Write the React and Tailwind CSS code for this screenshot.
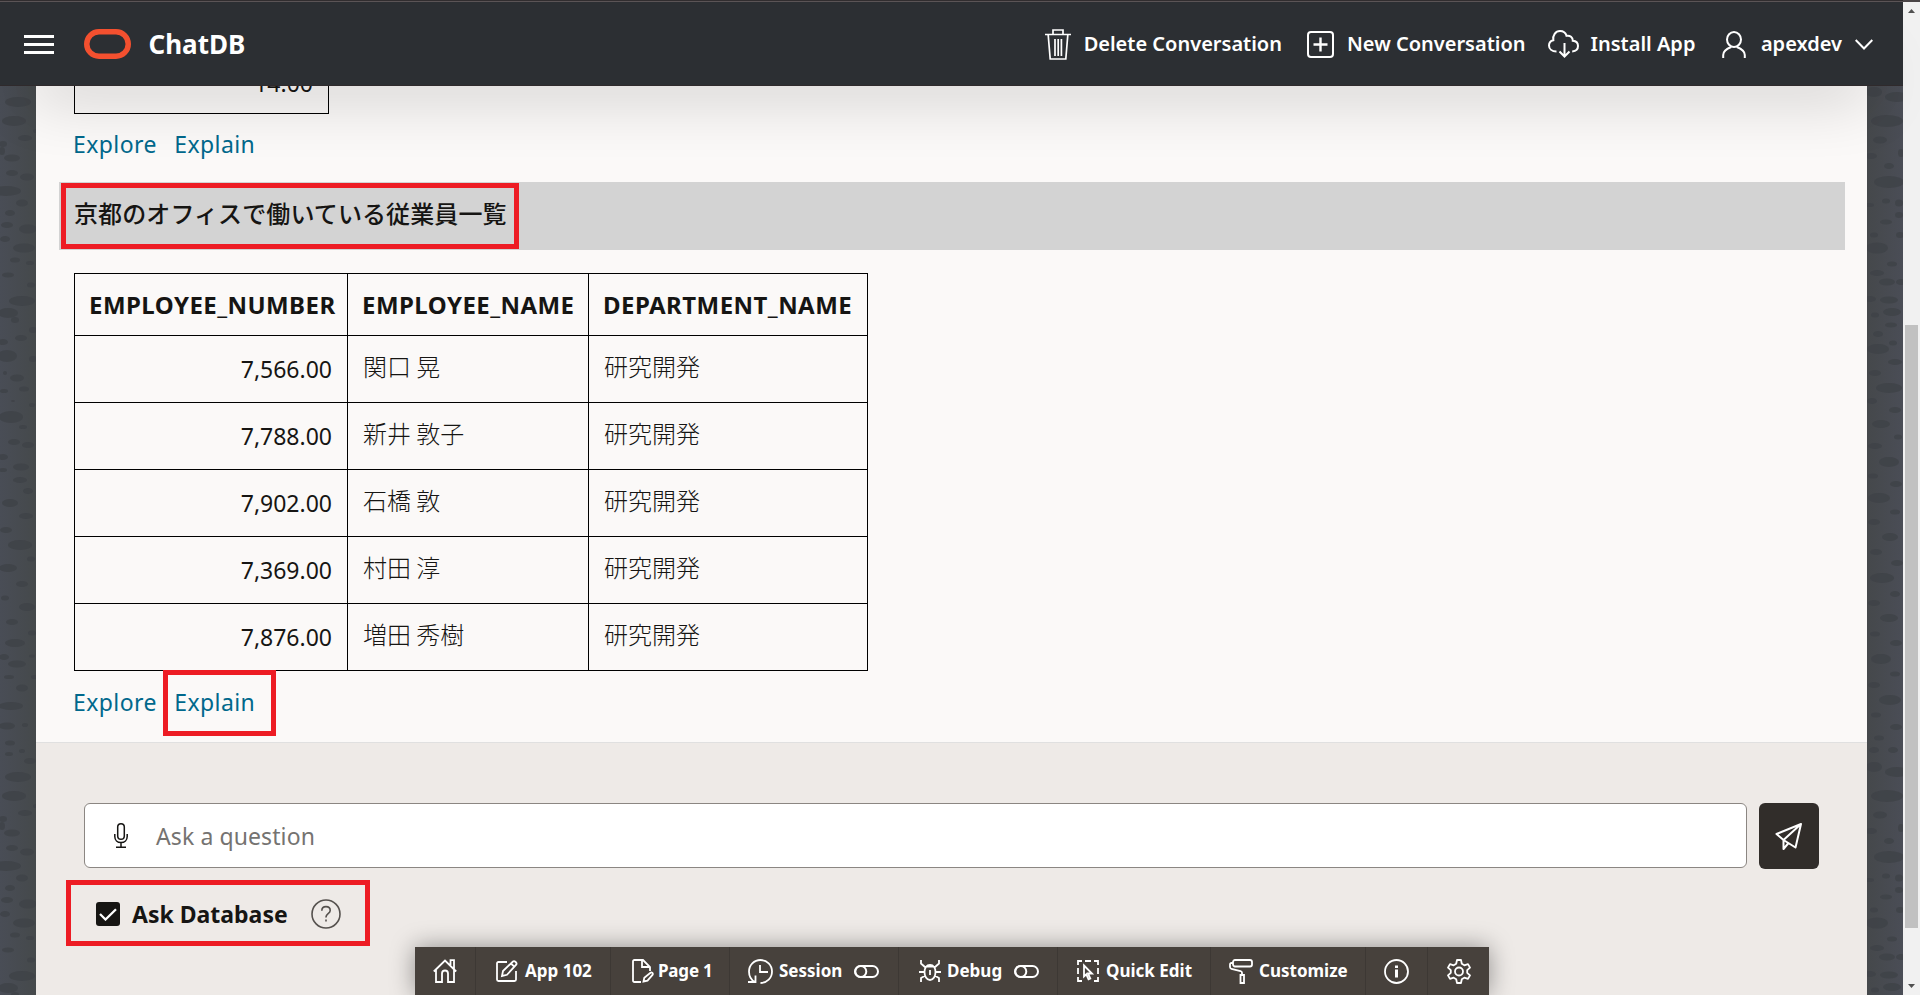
import React from "react";

const employees = [
  { number: "7,566.00", name: "関口 晃", department: "研究開発" },
  { number: "7,788.00", name: "新井 敦子", department: "研究開発" },
  { number: "7,902.00", name: "石橋 敦", department: "研究開発" },
  { number: "7,369.00", name: "村田 淳", department: "研究開発" },
  { number: "7,876.00", name: "増田 秀樹", department: "研究開発" },
];

// [cx, cy, rx, ry], the texture repeats every 675px
const TILE = 675;
const leftSpots = [
  [18, 102, 13, 5], [14, 121, 12, 5], [25, 138, 7, 3], [3, 144, 4, 3], [2, 151, 3, 4], [12, 158, 8, 3.5],
  [36, 131, 3, 2], [12, 173, 6, 3], [27, 177, 7, 3.5], [6, 191, 15, 5], [22, 203, 6, 3.5], [10, 213, 5, 3],
  [28, 229, 9, 4.5], [7, 225, 6, 3], [5, 239, 5, 3], [24, 248, 11, 4.5], [15, 260, 5, 2.5], [30, 263, 4, 2],
  [8, 275, 6, 2.5], [31, 285, 4, 2.5], [22, 301, 13, 5], [8, 313, 10, 5], [15, 320, 4, 3], [33, 330, 4, 3],
  [21, 338, 6, 3], [3, 342, 5, 3], [7, 356, 10, 6], [33, 359, 4, 3], [5, 373, 2, 2], [17, 378, 7, 3.5],
  [4, 391, 4, 2], [24, 389, 5, 2.5], [32, 405, 3, 2], [13, 401, 2, 1], [11, 417, 12, 6], [23, 427, 4, 2],
  [14, 442, 6, 3], [28, 445, 6, 3], [3, 457, 5, 3], [21, 467, 8, 3.5], [3, 470, 4, 2], [20, 480, 7, 3],
  [28, 491, 5, 3], [10, 503, 8, 4], [26, 516, 7, 3], [6, 530, 6, 3], [20, 545, 12, 5], [31, 559, 4, 2.5],
  [8, 568, 9, 4], [22, 584, 6, 3], [5, 598, 4, 2.5], [27, 607, 8, 4], [12, 622, 6, 3], [32, 633, 4, 2.5],
  [15, 643, 10, 4], [4, 657, 5, 3], [17, 664, 9, 3.5], [32, 656, 3, 1.5], [9, 677, 5, 2], [34, 677, 3, 2],
  [22, 688, 6, 3.5], [11, 706, 12, 4], [7, 726, 8, 3.5], [25, 725, 3, 2], [10, 743, 5, 2.5], [22, 751, 3, 2],
  [9, 754, 4, 2], [30, 761, 6, 3],
];
const rightSpots = [
  [7, 92, 8, 5], [30, 97, 12, 5], [20, 121, 16, 6], [13, 140, 7, 3.5], [34, 153, 3, 4], [4, 156, 6, 3],
  [22, 166, 5, 3], [22, 182, 15, 6], [19, 201, 4, 2.5], [2, 205, 5, 2], [32, 203, 4, 3.5], [32, 215, 4, 3],
  [19, 222, 6, 2.5], [7, 235, 4, 2.5], [33, 235, 4, 3], [10, 248, 11, 5.5], [25, 264, 5, 2.5], [10, 273, 7, 3],
  [20, 282, 8, 3.5], [34, 282, 5, 3], [22, 300, 9, 3.5], [3, 299, 6, 3], [25, 312, 9, 4], [8, 315, 4, 2.5],
  [24, 325, 6, 2.5], [11, 334, 5, 3], [26, 343, 4, 2.5], [11, 349, 11, 5], [28, 362, 7, 3], [8, 373, 6, 3],
  [22, 388, 13, 5], [5, 401, 5, 3], [28, 410, 6, 3], [14, 424, 9, 4], [31, 437, 4, 2.5], [8, 446, 7, 3],
  [22, 462, 10, 5], [6, 476, 5, 2.5], [29, 484, 6, 3], [12, 498, 11, 5], [28, 512, 5, 2.5], [7, 522, 6, 3],
  [23, 537, 8, 4], [9, 552, 6, 3], [30, 563, 6, 3], [15, 578, 12, 5], [28, 594, 5, 3], [7, 603, 6, 3],
  [22, 618, 9, 4], [8, 634, 5, 2.5], [29, 643, 6, 3], [14, 659, 10, 5], [28, 674, 5, 2.5], [7, 685, 6, 3],
  [23, 700, 11, 5], [9, 715, 5, 2.5], [29, 727, 6, 3], [12, 738, 5, 2.5], [7, 750, 5, 3], [26, 750, 5, 3],
];

function Texture({ spots, side }) {
  return (
    <div
      className={
        side === "left"
          ? "w-9 shrink-0 bg-linear-to-r from-[#494d56] to-[#45494b]"
          : "w-9 shrink-0 bg-linear-to-r from-[#45484b] to-[#4a4d56]"
      }
    >
      <svg width="36" height="909" viewBox="0 86 36 909" fill="#3f4247">
        {[0, TILE].map((dy) =>
          spots.map(([cx, cy, rx, ry], i) => (
            <ellipse key={`${dy}-${i}`} cx={cx} cy={cy + dy} rx={rx} ry={ry} opacity="0.8" />
          ))
        )}
      </svg>
    </div>
  );
}

function Svg({ w, h, sw = 2, className = "", children }) {
  return (
    <svg
      width={w}
      height={h}
      viewBox={`0 0 ${w} ${h}`}
      fill="none"
      stroke="currentColor"
      strokeWidth={sw}
      className={`shrink-0 ${className}`}
    >
      {children}
    </svg>
  );
}

function Header() {
  return (
    <header className="relative z-10 flex h-[86px] shrink-0 flex-col border-b border-[#2f2a2c] bg-[#2c2f33] text-white shadow-[0_36px_64px_-32px_rgba(0,0,0,0.33)]">
      <div className="h-px bg-[#312d2f]" />
      <div className="h-px bg-[#5b5456]" />
      <div className="flex flex-1 items-center pt-px pl-6">
        <div className="flex w-[30px] flex-col gap-[5px]">
          <div className="h-[3px] bg-white" />
          <div className="h-[3px] bg-white" />
          <div className="h-[3px] bg-white" />
        </div>
        <Svg w={47} h={30} sw={5.5} className="ml-[29.5px] text-[#f4502f]">
          <rect x="2.75" y="2.75" width="41.5" height="24.5" rx="12.25" />
        </Svg>
        <span className="ml-[18px] text-[26px] leading-8 font-bold">ChatDB</span>
        <div className="ml-auto flex items-center pr-[30px] text-[20px] leading-7 font-semibold">
          <Svg w={26} h={31}>
            <path d="M0 5.5h26M8 5V1h10v4M3.2 6l2 24h15.6l2-24M10 10v17M13.2 10v17M16.4 10v17" strokeWidth="1.7" />
          </Svg>
          <span className="ml-[13px]">Delete Conversation</span>
          <Svg w={27} h={27} className="ml-[25px]">
            <rect x="1" y="1" width="25" height="25" rx="3" />
            <path d="M13.5 6.5v14M6.5 13.5h14" strokeWidth="2.4" />
          </Svg>
          <span className="ml-[13px]">New Conversation</span>
          <Svg w={31} h={28} className="ml-[22.5px]">
            <path d="M8.5 21.5C4 21.5 1 19 1 15.5c0-2.600 1.800-4.700 4.300-5.300C4.500 5.500 7.500 1 12 1c3.300 0 5.700 2 6.500 4.800 3.500-.8 6.500 1.700 6.300 5 3 .3 5.200 2.400 5.200 5.200 0 3-2.300 5.200-5.800 5.400M16.500 13v13.500M11.500 21.500l5 5 5-5" />
          </Svg>
          <span className="ml-[11.5px]">Install App</span>
          <Svg w={24} h={27} className="ml-[27px]">
            <ellipse cx="12" cy="8.500" rx="7" ry="7.500" />
            <path d="M1.200 27v-3c0-3.500 3-6 8-8M22.800 27v-3c0-3.500-3-6-8-8" />
          </Svg>
          <span className="ml-[14.5px]">apexdev</span>
          <Svg w={18} h={11} className="ml-[13px]">
            <path d="M.7 1l8.300 8.500L17.300 1" />
          </Svg>
        </div>
      </div>
    </header>
  );
}

function Links() {
  return (
    <div className="flex gap-[17.5px] pl-[37px] text-[23px] leading-8 tracking-[0.4px] text-[#00688c]">
      <a href="#">Explore</a>
      <a href="#">Explain</a>
    </div>
  );
}

function ResultTable() {
  return (
    <table className="ml-[38px] w-[794px] table-fixed border-collapse text-[23px] leading-8">
      <colgroup>
        <col className="w-[273px]" />
        <col className="w-[241px]" />
        <col />
      </colgroup>
      <thead>
        <tr className="h-[62px]">
          {["EMPLOYEE_NUMBER", "EMPLOYEE_NAME", "DEPARTMENT_NAME"].map((c) => (
            <th key={c} className="border border-black p-0 pl-[14px] text-left text-[24px] font-bold tracking-[0.45px]">
              {c}
            </th>
          ))}
        </tr>
      </thead>
      <tbody>
        {employees.map((e) => (
          <tr key={e.number} className="h-[67px]">
            <td className="border border-black p-0 pr-[15px] text-right">{e.number}</td>
            <td className="border border-black p-0 pb-1.5 pl-[15px] font-['Noto_Sans_CJK_JP',sans-serif] text-[24px] font-light">
              {e.name}
            </td>
            <td className="border border-black p-0 pb-1.5 pl-[15px] font-['Noto_Sans_CJK_JP',sans-serif] text-[24px] font-light">
              {e.department}
            </td>
          </tr>
        ))}
      </tbody>
    </table>
  );
}

function AskForm() {
  return (
    <div className="flex-1 border-t border-[#e0e0e0] bg-[#eeeae7] pt-[60px] pl-12">
      <div className="flex gap-3">
        <div className="flex h-[65px] w-[1663px] items-center rounded-md border border-[#8b8682] bg-white pl-[29px]">
          <Svg w={14} h={25} sw={1.5}>
            <rect x="3.700" y=".8" width="6.600" height="15.500" rx="3.300" />
            <path d="M.8 11v2.500c0 3.600 2.600 6 6.200 6s6.200-2.400 6.200-6V11M7 19.500v4.500M2 24.200h10" />
          </Svg>
          <span className="ml-7 text-[23px] leading-8 tracking-[0.1px] text-[#757371]">Ask a question</span>
        </div>
        <button className="flex h-[66px] w-[60px] items-center justify-center rounded-md bg-[#312d2a] pr-0.5 text-white">
          <Svg w={27} h={27}>
            <path d="M1.500 11L26 1l-5.500 23.500-12-7.500zM26 1L8.500 17v9l5-6" strokeLinejoin="round" />
          </Svg>
        </button>
      </div>
      <div className="mt-[30px] flex h-[30px] items-center pl-3">
        <div className="flex size-6 items-center justify-center rounded-[3px] bg-[#161513] text-white">
          <Svg w={18} h={13} sw={2.3}>
            <path d="M1 6l5.500 5.500L17 1.200" />
          </Svg>
        </div>
        <span className="ml-3 text-[23px] leading-[30px] font-bold">Ask Database</span>
        <Svg w={30} h={30} sw={1.6} className="ml-[23.5px] text-[#55514e]">
          <circle cx="15" cy="15" r="14" />
          <path d="M10.800 11.800c0-2.600 1.700-4.200 4.200-4.200s4.200 1.500 4.200 3.800c0 3.200-4.200 3.300-4.200 6.600v.5M15 20.500v2" />
        </Svg>
      </div>
    </div>
  );
}

function ToggleIcon() {
  return (
    <Svg w={25} h={13} className="ml-3">
      <rect x="1" y="1" width="23" height="11" rx="5.500" />
      <circle cx="6.800" cy="6.500" r="5.500" />
    </Svg>
  );
}

function DevToolbar() {
  return (
    <div className="absolute top-[947px] left-[415px] z-20 flex h-12 w-[1074px] bg-[#47413c] text-[17px] font-bold text-white shadow-[0_0_24px_rgba(0,0,0,0.4)]">
      <div className="flex w-[61px] items-center border-r border-[#3d3834] pl-[18px]">
        <Svg w={24} h={24}>
          <path d="M.8 12.500L12 1.500l11.200 11M3 11v12h6v-8.500c0-1.700 1.300-3 3-3s3 1.300 3 3V23h6V11M17.500 6V1.200H21v8.500" strokeWidth="1.800" />
        </Svg>
      </div>
      <div className="flex w-[135px] items-center border-r border-[#3d3834] pl-5">
        <Svg w={22} h={22} sw={1.8}>
          <path d="M11 2H2.500C1.500 2 1 2.500 1 3.500v16c0 1 .5 1.500 1.500 1.500h16c1 0 1.500-.5 1.500-1.500V11M6 16l1-5L17 1.500c1.500-1.200 4.500 1.500 3.200 3.200L11 14.800zM15 3.500l3.200 3.200" />
        </Svg>
        <span className="ml-[7px]">App 102</span>
      </div>
      <div className="flex w-[119px] items-center border-r border-[#3d3834] pl-[21px]">
        <Svg w={22} h={24} sw={1.8}>
          <path d="M9 23H2.500C1.500 23 1 22.500 1 21.500v-19C1 1.500 1.500 1 2.500 1H11l7 7v4M10 1.500V8h7M11.500 22.500l.8-3.800 6.200-5c1.300-.8 3 .8 2 2.200l-5 5.800z" />
        </Svg>
        <span className="ml-[4px] tracking-[-0.2px]">Page 1</span>
      </div>
      <div className="flex w-[169px] items-center border-r border-[#3d3834] pl-[18px]">
        <Svg w={25} h={25} sw={1.8}>
          <path d="M7 23C3 21 1 17 1 12.500 1 6 6 1 12.500 1S24 6 24 12.500 19 24 12.500 24M12 6v7h8M7.500 16.500V23H0" />
        </Svg>
        <span className="ml-[6px]">Session</span>
        <ToggleIcon />
      </div>
      <div className="flex w-[159px] items-center border-r border-[#3d3834] pl-5">
        <Svg w={22} h={22} sw={1.8}>
          <path d="M5.500 12c0-4 2-7 5.500-7s5.500 3 5.500 7-2 8-5.500 8-5.500-4-5.500-8zM7 6.500h8M11 10v5M2 0v3.500l4.500 4M20 0v3.500l-4.500 4M0 12h5.500M16.500 12H22M2 22v-4l4.500-2.500M20 22v-4l-4.500-2.500" />
        </Svg>
        <span className="ml-[6px]">Debug</span>
        <ToggleIcon />
      </div>
      <div className="flex w-[153px] items-center border-r border-[#3d3834] pl-[19px]">
        <Svg w={22} h={22} sw={1.8}>
          <path d="M1 5V1h4M8 1h6M17 1h4v4M21 8v6M21 17v4h-4M5 21H1v-4M1 14V8" />
          <path d="M7 5.500l8 8h-4l2.300 5-1.800.8-2.200-5-2.300 2.200z" />
        </Svg>
        <span className="ml-[7px]">Quick Edit</span>
      </div>
      <div className="flex w-[155px] items-center border-r border-[#3d3834] pl-[18px]">
        <Svg w={24} h={25} sw={1.8}>
          <rect x="4" y="1" width="19" height="6.500" rx="2" />
          <path d="M4 4H2.500C1.500 4 1 4.500 1 5.500V8c0 1 .5 1.500 1.500 2l9 2c1 .3 1.500 1 1.500 1.800V16M11.500 16h3.500v8h-3.500z" />
        </Svg>
        <span className="ml-[6px]">Customize</span>
      </div>
      <div className="flex w-[62px] items-center border-r border-[#3d3834] pl-[18px]">
        <Svg w={25} h={25} sw={1.8}>
          <circle cx="12.500" cy="12.500" r="11.500" />
          <path d="M12.500 10.500v8M12.500 6.500v2.500" strokeWidth="3" />
        </Svg>
      </div>
      <div className="flex flex-1 items-center pl-[19px]">
        <Svg w={24} h={25} sw={1.8}>
          <circle cx="12" cy="12.500" r="4" />
          <path d="M10 1h4l.8 3.800 2.500 1.500 3.700-1.200 2 3.500-2.800 2.600v2.600l2.800 2.600-2 3.500-3.700-1.200-2.500 1.500L14 24h-4l-.8-3.800-2.500-1.500L3 19.900l-2-3.500 2.800-2.600v-2.600L1 8.600l2-3.500 3.700 1.200 2.500-1.500z" strokeLinejoin="round" />
        </Svg>
      </div>
    </div>
  );
}

function Scrollbar() {
  return (
    <div className="flex w-[17px] shrink-0 flex-col items-center bg-[#f1f1f1] text-[#505050]">
      <div className="h-0.5 w-full bg-[#4a4547]" />
      <svg width="7" height="4" viewBox="0 0 7 4" fill="currentColor" className="mt-[7px]">
        <path d="M3.500 0L7 4H0z" />
      </svg>
      <div className="mt-[312px] h-[603px] w-[13px] bg-[#c1c1c1]" />
      <svg width="7" height="4" viewBox="0 0 7 4" fill="currentColor" className="mt-auto mb-[7px]">
        <path d="M0 0h7L3.500 4z" />
      </svg>
    </div>
  );
}

function App() {
  return (
    <div className="relative flex h-[995px] w-[1920px] overflow-hidden bg-[#fbf9f8] font-['Noto_Sans','Noto_Sans_CJK_JP',sans-serif] text-[#161513]">
      <div className="flex min-w-0 flex-1 flex-col">
        <Header />
        <div className="flex flex-1">
          <Texture spots={leftSpots} side="left" />
          <main className="flex flex-1 flex-col">
            <div className="h-[656px] overflow-hidden">
              {/* tail of the previous answer, scrolled under the header */}
              <div className="-mt-[39px] ml-[38px] h-[67px] w-[255px] border border-black pt-[21px] pr-[15px] text-right text-[23px] leading-7">
                14.00
              </div>
              <div className="pt-[14px]">
                <Links />
              </div>
              <div className="mt-[22px] mr-[22px] ml-[23px] h-[68px] bg-[#d3d3d3] pt-[13px] pl-[15px]">
                <p className="font-['Noto_Sans_CJK_JP',sans-serif] text-[24px] leading-9 font-medium tracking-[0.1px]">
                  京都のオフィスで働いている従業員一覧
                </p>
              </div>
              <div className="pt-[23px]">
                <ResultTable />
              </div>
              <div className="pt-[15px]">
                <Links />
              </div>
            </div>
            <AskForm />
          </main>
          <Texture spots={rightSpots} side="right" />
        </div>
      </div>
      <Scrollbar />

      {/* red callouts */}
      <div className="absolute top-[183px] left-[61px] h-[66px] w-[458px] border-5 border-[#ed1c24]" />
      <div className="absolute top-[670px] left-[163px] h-[66px] w-[113px] border-5 border-[#ed1c24]" />
      <div className="absolute top-[880px] left-[66px] h-[66px] w-[304px] border-5 border-[#ed1c24]" />
      <DevToolbar />
    </div>
  );
}

export default App;
